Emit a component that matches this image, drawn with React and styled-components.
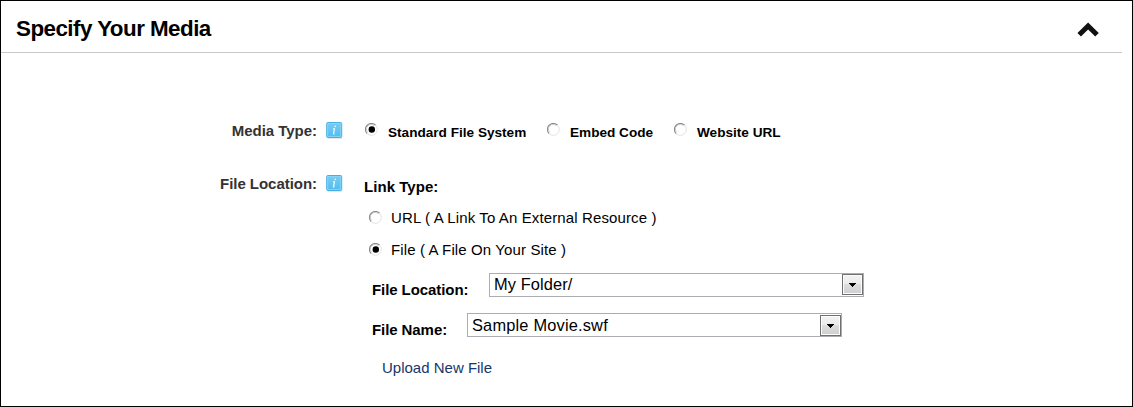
import React from "react";
import styled, { createGlobalStyle } from "styled-components";

const GlobalStyle = createGlobalStyle`
  *, *::before, *::after { box-sizing: border-box; }
  body {
    margin: 0;
    background: #fff;
    font-family: "Liberation Sans", Arial, sans-serif;
    color: #000;
  }
`;

const Frame = styled.main`
  width: 1133px;
  height: 407px;
  border: 1px solid #000;
  background: #fff;
`;

const Header = styled.header`
  display: flex;
  align-items: flex-start;
  justify-content: space-between;
  width: 1121px;
  height: 52px;
  padding: 15px 22px 0 15px;
  border-bottom: 1px solid #c8c8c8;
`;

const Title = styled.h1`
  margin: 0;
  font-size: 22.4px;
  line-height: 26px;
  letter-spacing: -0.54px;
  white-space: nowrap;
`;

const Chevron = styled.svg`
  display: block;
  width: 24px;
  height: 16px;
  margin-top: 6px;
`;

const Form = styled.div`
  display: flex;
  flex-direction: column;
  padding-top: 68px;
`;

const FormRow = styled.section`
  display: grid;
  grid-template-columns: 316px 47px 1fr;
  height: ${(p) => p.$height}px;
`;

const FieldLabel = styled.div`
  text-align: right;
  font-size: 15px;
  font-weight: bold;
  line-height: 20px;
  letter-spacing: -0.04px;
  color: #333;
  white-space: nowrap;
`;

const Info = styled.svg`
  display: block;
  width: 18px;
  height: 18px;
  margin: 0 0 0 9px;
`;

const RadioGroup = styled.div`
  display: flex;
  align-items: flex-start;
  padding: 2px 0 0 1px;
`;

const RadioOption = styled.label`
  display: flex;
  align-items: flex-start;
  width: ${(p) => p.$width}px;
  font-size: 13.6px;
  font-weight: bold;
  line-height: 20px;
  white-space: nowrap;
  & > svg { margin: 0 10px 0 0; }
`;

const Stack = styled.div`
  display: flex;
  flex-direction: column;
  align-items: flex-start;
  padding-top: 3px;
`;

const StackLabel = styled.div`
  height: 31px;
  font-size: 15px;
  font-weight: bold;
  line-height: 20px;
  letter-spacing: 0.05px;
`;

const LinkOption = styled.label`
  display: flex;
  align-items: flex-start;
  height: 32px;
  padding-left: 5px;
  font-size: 15px;
  line-height: 20px;
  letter-spacing: 0.12px;
  white-space: nowrap;
  & > svg { margin: 3px 9px 0 0; }
`;

const Pickers = styled.div`
  padding: 1px 0 5px 8px;
`;

const PickerRow = styled.div`
  display: flex;
  align-items: flex-start;
  height: 40px;
`;

const PickerLabel = styled.div`
  width: ${(p) => p.$width}px;
  padding-top: 7px;
  font-size: 15px;
  font-weight: bold;
  line-height: 20px;
  letter-spacing: -0.08px;
  white-space: nowrap;
`;

const Picker = styled.div`
  display: flex;
  align-items: flex-start;
  justify-content: space-between;
  width: 375px;
  height: 24px;
  border: 1px solid #abadb3;
  padding: ${(p) => p.$drop}px 0 0 4px;
`;

const PickerValue = styled.span`
  font-size: 16.4px;
  line-height: 20px;
  letter-spacing: ${(p) => p.$track}px;
  white-space: nowrap;
`;

const PickerButton = styled.span`
  display: flex;
  align-items: center;
  justify-content: center;
  width: 21px;
  height: 21px;
  border: 1px solid #707070;
  box-shadow: inset 0 0 0 1px #fcfcfc;
  background: linear-gradient(#f2f2f2 0%, #ebebeb 50%, #dddddd 50%, #cfcfcf 100%);
`;

const UploadLink = styled.a`
  padding-left: 18px;
  font-size: 15px;
  line-height: 20px;
  color: #15376b;
  text-decoration: none;
`;

function Radio({ checked }) {
  return (
    <svg width="13" height="13" viewBox="0 0 13 13" fill="none" aria-hidden="true">
      <path d="M2.2 10.6A5.6 5.6 0 0 1 10.6 2.2" stroke="#8c8c8c" strokeWidth="1.2" />
      <path d="M10.6 2.2A5.6 5.6 0 0 1 2.2 10.6" stroke="#e2e2e2" strokeWidth="1" />
      <path d="M2.8 9.4A4.6 4.6 0 0 1 9.4 2.8" stroke="#c4c4c4" strokeWidth="0.8" />
      {checked && <circle cx="6.8" cy="6.5" r="3.2" fill="#000" />}
    </svg>
  );
}

function InfoIcon() {
  return (
    <Info viewBox="0 0 18 18" aria-label="Info">
      <defs>
        <linearGradient id="infoFill" x1="0" y1="0" x2="0" y2="1">
          <stop offset="0" stopColor="#7cccf2" />
          <stop offset="1" stopColor="#4fbdf0" />
        </linearGradient>
      </defs>
      <path d="M2 17.4H16" stroke="#e4e4e4" strokeWidth="1" />
      <rect x="0.7" y="1.5" width="15" height="15" rx="1" fill="url(#infoFill)" stroke="#4aaee3" />
      <rect x="1.7" y="2.5" width="13" height="13" fill="none" stroke="#8ad6f7" strokeWidth="0.8" />
      <path d="M9.4 4.7L9.1 6.2M8.6 7.5L7.4 12.9M7.1 7.7H8.7M7 12.8H8.5" stroke="#e9f8ff" strokeWidth="1.3" />
    </Info>
  );
}

function Select({ value, track, drop = 0 }) {
  return (
    <Picker $drop={drop}>
      <PickerValue $track={track}>{value}</PickerValue>
      <PickerButton>
        <svg width="7" height="4" viewBox="0 0 7 4" shapeRendering="crispEdges">
          <path d="M0 0H7V1H6V2H5V3H4V4H3V3H2V2H1V1H0Z" fill="#000" />
        </svg>
      </PickerButton>
    </Picker>
  );
}

export default function App() {
  return (
    <>
      <GlobalStyle />
      <Frame>
        <Header>
          <Title>Specify Your Media</Title>
          <Chevron viewBox="0 0 24 16">
            <path d="M3.2 12.8L12.1 4L21 12.8" fill="none" stroke="#111" strokeWidth="5" />
          </Chevron>
        </Header>
        <Form>
          <FormRow $height={53}>
            <FieldLabel>Media Type:</FieldLabel>
            <InfoIcon />
            <RadioGroup>
              <RadioOption $width={182}><Radio checked />Standard File System</RadioOption>
              <RadioOption $width={127}><Radio />Embed Code</RadioOption>
              <RadioOption $width={120}><Radio />Website URL</RadioOption>
            </RadioGroup>
          </FormRow>
          <FormRow $height={220}>
            <FieldLabel>File Location:</FieldLabel>
            <InfoIcon />
            <Stack>
              <StackLabel>Link Type:</StackLabel>
              <LinkOption><Radio />URL ( A Link To An External Resource )</LinkOption>
              <LinkOption><Radio checked />File ( A File On Your Site )</LinkOption>
              <Pickers>
                <PickerRow>
                  <PickerLabel $width={117}>File Location:</PickerLabel>
                  <Select value="My Folder/" track={0.1} />
                </PickerRow>
                <PickerRow>
                  <PickerLabel $width={95}>File Name:</PickerLabel>
                  <Select value="Sample Movie.swf" track={0.18} drop={1} />
                </PickerRow>
              </Pickers>
              <UploadLink>Upload New File</UploadLink>
            </Stack>
          </FormRow>
        </Form>
      </Frame>
    </>
  );
}
